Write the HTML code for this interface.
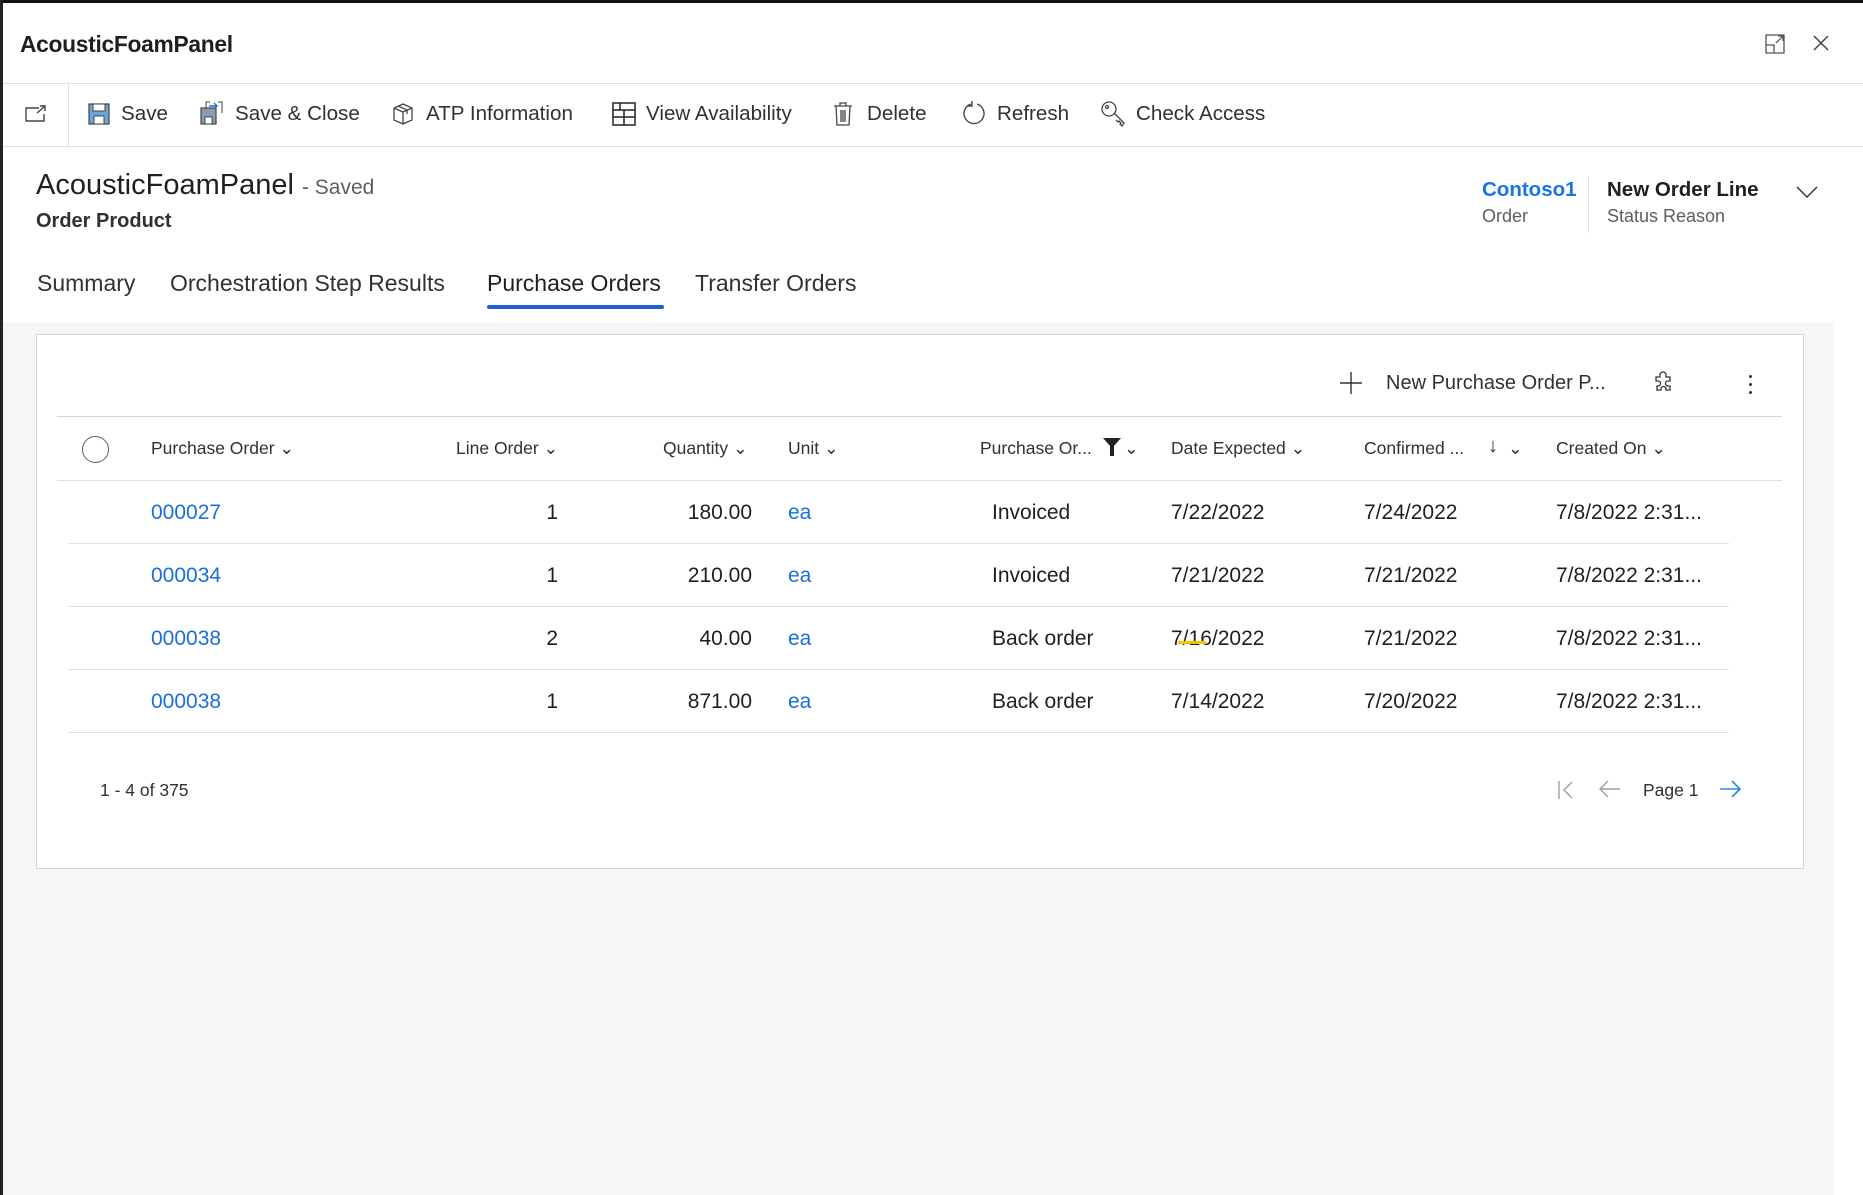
<!DOCTYPE html>
<html><head><meta charset="utf-8"><style>
*{margin:0;padding:0;box-sizing:border-box}
body{width:1863px;height:1195px;position:relative;overflow:hidden;background:#fff;font-family:"Liberation Sans",sans-serif;color:#323130}
.a{position:absolute;white-space:nowrap}
.cmd{font-size:20.6px;color:#323130;top:102px}
.hd{font-size:17.5px;color:#323130;top:438px}
.d{font-size:21px;color:#201f1e}
.lk{color:#1a6fd8}
.ln{position:absolute;height:1px;background:#e1dfdd}
svg{position:absolute;overflow:visible}
</style></head><body>
<div class="a" style="left:0;top:0;width:1863px;height:3px;background:#111"></div>
<div class="a" style="left:0;top:0;width:3px;height:1195px;background:#222"></div>
<div class="a" style="left:20px;top:31px;font-size:22.8px;font-weight:bold;color:#201f1e;letter-spacing:-0.3px">AcousticFoamPanel</div>
<svg style="left:1765px;top:34px" width="20" height="20" fill="none" stroke="#555" stroke-width="1.3"><path d="M1 1h18v18H1z"/><path d="M1 11h8v8M11 9l7-7M13 2h5v5"/></svg>
<svg style="left:1813px;top:35px" width="16" height="16" stroke="#444" stroke-width="1.5"><path d="M1 1l14 14M15 1L1 15"/></svg>
<div class="ln" style="left:3px;top:83px;width:1860px"></div>
<div class="ln" style="left:3px;top:146px;width:1860px"></div>
<div class="a" style="left:68px;top:84px;width:1px;height:62px;background:#e1dfdd"></div>
<svg style="left:25px;top:105px" width="22" height="18" fill="none" stroke="#444" stroke-width="1.4"><path d="M14 3H1v13h18V9"/><path d="M12 8l8-7M15 1h5v5"/></svg>
<svg style="left:88px;top:103px" width="22" height="22"><rect x="1" y="1" width="20" height="20" fill="#6ca6db" stroke="#444" stroke-width="1.2"/><rect x="5" y="1" width="12" height="7" fill="#fff" stroke="#444"/><rect x="6" y="13" width="10" height="8" fill="#fff" stroke="#444"/></svg>
<div class="a cmd" style="left:121px">Save</div>
<svg style="left:200px;top:101px" width="24" height="24"><rect x="1" y="7" width="15" height="16" fill="#8a9bb0" stroke="#444" stroke-width="1.2"/><rect x="5" y="16" width="7" height="7" fill="#fff" stroke="#444"/><path d="M6 7V1h4M18 1h4v11" fill="none" stroke="#444"/><path d="M9 5h8M14 2l3 3-3 3" fill="none" stroke="#1f6fd0" stroke-width="1.4"/></svg>
<div class="a cmd" style="left:235px">Save &amp; Close</div>
<svg style="left:393px;top:103px" width="20" height="22" fill="none" stroke="#444" stroke-width="1.3"><path d="M10 1l9 4v12l-9 4-9-4V5z M1 5l9 4 9-4 M10 9v12 M5 3l9 4v4"/></svg>
<div class="a cmd" style="left:426px">ATP Information</div>
<svg style="left:612px;top:102px" width="24" height="24" fill="none" stroke="#222" stroke-width="1.5"><path d="M1 1h22v22H1z M1 8h22 M12 8v15 M1 15h22 M8 1v7"/></svg>
<div class="a cmd" style="left:646px">View Availability</div>
<svg style="left:833px;top:102px" width="20" height="24" fill="none" stroke="#444" stroke-width="1.3"><path d="M1 4h18 M7 4V1h6v3 M3 4l1 19h12l1-19 M8 8v12 M10 8v12 M12 8v12"/></svg>
<div class="a cmd" style="left:867px">Delete</div>
<svg style="left:962px;top:101px" width="24" height="26" fill="none" stroke="#444" stroke-width="1.4"><path d="M9 3A10 10 0 1 0 15 3"/><path d="M10 0v5H5"/></svg>
<div class="a cmd" style="left:997px">Refresh</div>
<svg style="left:1101px;top:101px" width="26" height="26" fill="none" stroke="#444" stroke-width="1.3"><circle cx="8" cy="8" r="7"/><circle cx="6" cy="6" r="1.5"/><path d="M13 12l10 10-2 3-2-2 1-1-2-2-1 1-2-2"/></svg>
<div class="a cmd" style="left:1136px">Check Access</div>

<div class="a" style="left:36px;top:169px;font-size:29px;color:#201f1e">AcousticFoamPanel <span style="font-size:21px;color:#605e5c">- Saved</span></div>
<div class="a" style="left:36px;top:210px;font-size:20px;font-weight:bold;color:#323130">Order Product</div>
<div class="a" style="left:1482px;top:178px;font-size:20.5px;font-weight:bold;color:#1a73e8">Contoso1</div>
<div class="a" style="left:1482px;top:206px;font-size:18px;color:#605e5c">Order</div>
<div class="a" style="left:1588px;top:177px;width:1px;height:56px;background:#e1dfdd"></div>
<div class="a" style="left:1607px;top:178px;font-size:20.5px;font-weight:bold;color:#201f1e">New Order Line</div>
<div class="a" style="left:1607px;top:206px;font-size:18px;color:#605e5c">Status Reason</div>
<svg style="left:1796px;top:186px" width="22" height="12" fill="none" stroke="#333" stroke-width="1.5"><path d="M1 1l10 10L21 1"/></svg>

<div class="a" style="left:37px;top:270px;font-size:23px;color:#323130">Summary</div>
<div class="a" style="left:170px;top:270px;font-size:23px;color:#323130">Orchestration Step Results</div>
<div class="a" style="left:487px;top:270px;font-size:23px;color:#201f1e">Purchase Orders</div>
<div class="a" style="left:487px;top:305px;width:177px;height:4px;background:#1f5fd6;border-radius:2px"></div>
<div class="a" style="left:695px;top:270px;font-size:23px;color:#323130">Transfer Orders</div>

<div class="a" style="left:3px;top:322px;width:1831px;height:873px;background:#f7f6f5"></div>
<div class="a" style="left:36px;top:334px;width:1768px;height:535px;background:#fff;border:1px solid #d6d4d2"></div>

<svg style="left:1340px;top:372px" width="22" height="22" stroke="#333" stroke-width="1.4"><path d="M11 0v22M0 11h22"/></svg>
<div class="a" style="left:1386px;top:372px;font-size:20px;color:#323130">New Purchase Order P...</div>
<svg style="left:1653px;top:372px" width="20" height="22" fill="none" stroke="#333" stroke-width="1.3"><path d="M7 3a3 3 0 0 1 6 0v2h4v4h-2a2.5 2.5 0 0 0 0 5h2v4h-4v-1a2.5 2.5 0 0 0-5 0v1H4v-4h1a2.5 2.5 0 0 0 0-5H3V5h4z"/></svg>
<div class="a" style="left:1749px;top:375px;width:3px;height:3px;border-radius:50%;background:#333;box-shadow:0 8px 0 #333,0 16px 0 #333"></div>

<div class="ln" style="left:57px;top:416px;width:1725px;background:#d6d4d2"></div>
<div class="ln" style="left:57px;top:480px;width:1725px"></div>
<div class="a" style="left:82px;top:436px;width:27px;height:27px;border:1.5px solid #605e5c;border-radius:50%"></div>
<div class="a hd" style="left:151px">Purchase Order ⌄</div>
<div class="a hd" style="left:456px">Line Order ⌄</div>
<div class="a hd" style="left:663px">Quantity ⌄</div>
<div class="a hd" style="left:788px">Unit ⌄</div>
<div class="a hd" style="left:980px">Purchase Or...</div>
<svg style="left:1103px;top:438px" width="18" height="20"><path d="M0 0h18l-7 8v10H7V8z" fill="#222"/></svg>
<div class="a hd" style="left:1124px">⌄</div>
<div class="a hd" style="left:1171px">Date Expected ⌄</div>
<div class="a hd" style="left:1364px">Confirmed ...</div>
<div class="a hd" style="left:1488px;font-size:20px;top:435px">↓</div>
<div class="a hd" style="left:1508px">⌄</div>
<div class="a hd" style="left:1556px">Created On ⌄</div>

<div class="ln" style="left:68px;top:543px;width:1661px"></div>
<div class="ln" style="left:68px;top:606px;width:1661px"></div>
<div class="ln" style="left:68px;top:669px;width:1661px"></div>
<div class="ln" style="left:68px;top:732px;width:1661px"></div>

<div class="a d lk" style="left:151px;top:501px">000027</div>
<div class="a d" style="left:500px;width:58px;text-align:right;top:501px">1</div>
<div class="a d" style="left:650px;width:102px;text-align:right;top:501px">180.00</div>
<div class="a d lk" style="left:788px;top:501px">ea</div>
<div class="a d" style="left:992px;top:501px">Invoiced</div>
<div class="a d" style="left:1171px;top:501px">7/22/2022</div>
<div class="a d" style="left:1364px;top:501px">7/24/2022</div>
<div class="a d" style="left:1556px;top:501px">7/8/2022 2:31...</div>

<div class="a d lk" style="left:151px;top:564px">000034</div>
<div class="a d" style="left:500px;width:58px;text-align:right;top:564px">1</div>
<div class="a d" style="left:650px;width:102px;text-align:right;top:564px">210.00</div>
<div class="a d lk" style="left:788px;top:564px">ea</div>
<div class="a d" style="left:992px;top:564px">Invoiced</div>
<div class="a d" style="left:1171px;top:564px">7/21/2022</div>
<div class="a d" style="left:1364px;top:564px">7/21/2022</div>
<div class="a d" style="left:1556px;top:564px">7/8/2022 2:31...</div>

<div class="a d lk" style="left:151px;top:627px">000038</div>
<div class="a d" style="left:500px;width:58px;text-align:right;top:627px">2</div>
<div class="a d" style="left:650px;width:102px;text-align:right;top:627px">40.00</div>
<div class="a d lk" style="left:788px;top:627px">ea</div>
<div class="a d" style="left:992px;top:627px">Back order</div>
<div class="a d" style="left:1171px;top:627px">7/16/2022</div>
<div class="a" style="left:1178px;top:641px;width:28px;height:3px;background:#f5c400"></div>
<div class="a d" style="left:1364px;top:627px">7/21/2022</div>
<div class="a d" style="left:1556px;top:627px">7/8/2022 2:31...</div>

<div class="a d lk" style="left:151px;top:690px">000038</div>
<div class="a d" style="left:500px;width:58px;text-align:right;top:690px">1</div>
<div class="a d" style="left:650px;width:102px;text-align:right;top:690px">871.00</div>
<div class="a d lk" style="left:788px;top:690px">ea</div>
<div class="a d" style="left:992px;top:690px">Back order</div>
<div class="a d" style="left:1171px;top:690px">7/14/2022</div>
<div class="a d" style="left:1364px;top:690px">7/20/2022</div>
<div class="a d" style="left:1556px;top:690px">7/8/2022 2:31...</div>

<div class="a" style="left:100px;top:780px;font-size:17.5px;color:#323130">1 - 4 of 375</div>
<svg style="left:1558px;top:781px" width="16" height="18" fill="none" stroke="#a19f9d" stroke-width="1.4"><path d="M1 0v18M14 1L6 9l8 8"/></svg>
<svg style="left:1599px;top:780px" width="22" height="18" fill="none" stroke="#a19f9d" stroke-width="1.4"><path d="M21 9H1M9 1L1 9l8 8"/></svg>
<div class="a" style="left:1643px;top:780px;font-size:17.5px;color:#323130">Page 1</div>
<svg style="left:1719px;top:780px" width="22" height="18" fill="none" stroke="#2b88d8" stroke-width="1.6"><path d="M1 9h20M13 1l8 8-8 8"/></svg>
</body></html>
